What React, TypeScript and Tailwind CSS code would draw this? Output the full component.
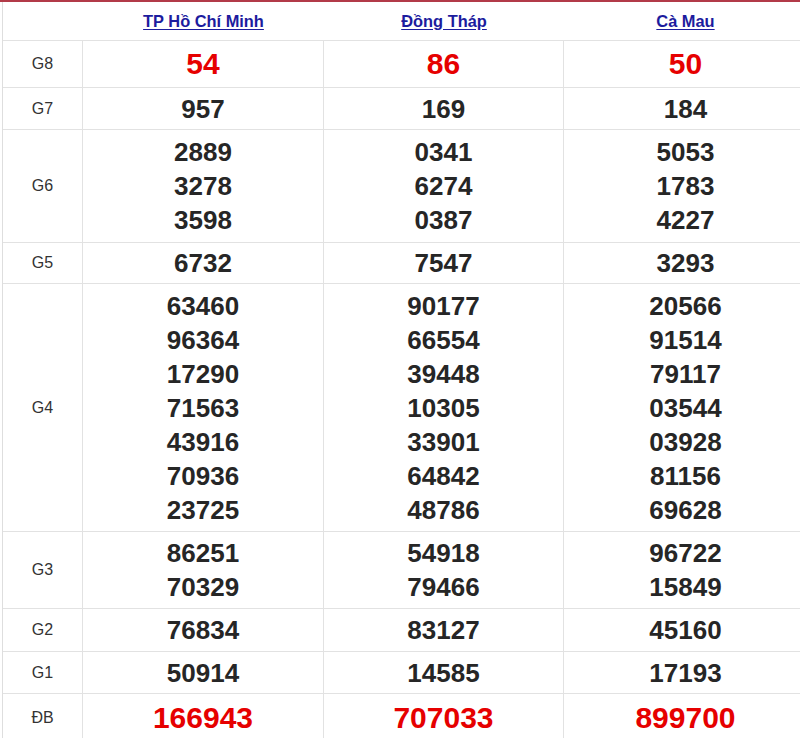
import React from "react";

type Row = { label: string; values: string[][]; red?: boolean; pad?: string };

const rows: Row[] = [
  { label: "G8", values: [["54"], ["86"], ["50"]], red: true, pad: "py-[3px]" },
  { label: "G7", values: [["957"], ["169"], ["184"]] },
  {
    label: "G6",
    values: [
      ["2889", "3278", "3598"],
      ["0341", "6274", "0387"],
      ["5053", "1783", "4227"],
    ],
    pad: "py-[5px]",
  },
  { label: "G5", values: [["6732"], ["7547"], ["3293"]], pad: "py-[3px]" },
  {
    label: "G4",
    values: [
      ["63460", "96364", "17290", "71563", "43916", "70936", "23725"],
      ["90177", "66554", "39448", "10305", "33901", "64842", "48786"],
      ["20566", "91514", "79117", "03544", "03928", "81156", "69628"],
    ],
    pad: "py-[4.5px]",
  },
  {
    label: "G3",
    values: [
      ["86251", "70329"],
      ["54918", "79466"],
      ["96722", "15849"],
    ],
    pad: "py-[4px]",
  },
  { label: "G2", values: [["76834"], ["83127"], ["45160"]], pad: "py-[4px]" },
  { label: "G1", values: [["50914"], ["14585"], ["17193"]] },
  { label: "ĐB", values: [["166943"], ["707033"], ["899700"]], red: true, pad: "py-[3.5px]" },
];

const provinces = ["TP Hồ Chí Minh", "Đồng Tháp", "Cà Mau"];

export default function App() {
  return (
    <div
      className="w-[800px] h-[738px] overflow-hidden bg-white"
      style={{ fontFamily: '"Liberation Sans", Arial, sans-serif' }}
    >
      <div className="w-[806px] border-t-2 border-t-[#b23a48]">
        <div className="ml-[2px] w-[804px] border-l border-l-[#dedede]">
          <div className="grid grid-cols-[80px_241px_240px_243px] h-[39px] border-b border-b-[#e2e2e2] items-center">
            <div />
            {provinces.map((p) => (
              <div key={p} className="text-center">
                <a
                  href="#"
                  className="text-[16.4px] font-bold text-[#1c1c9e] underline underline-offset-2"
                >
                  {p}
                </a>
              </div>
            ))}
          </div>
          {rows.map((r) => (
            <div
              key={r.label}
              className="grid grid-cols-[80px_241px_240px_243px] border-b border-b-[#e2e2e2]"
            >
              <div className="flex items-center justify-center border-r border-r-[#e2e2e2] text-[16px] text-[#333]">
                {r.label}
              </div>
              {r.values.map((col, i) => (
                <div
                  key={i}
                  className={
                    "flex flex-col items-center justify-center " +
                    (r.pad ?? "py-[3.5px]") +
                    " " +
                    (i < 2 ? "border-r border-r-[#e2e2e2]" : "")
                  }
                >
                  {col.map((v, j) =>
                    r.red ? (
                      <div
                        key={j}
                        className="text-[30px] leading-[40px] font-bold text-[#e60000]"
                      >
                        {v}
                      </div>
                    ) : (
                      <div
                        key={j}
                        className="text-[26px] leading-[34px] font-bold text-[#262626]"
                      >
                        {v}
                      </div>
                    )
                  )}
                </div>
              ))}
            </div>
          ))}
        </div>
      </div>
    </div>
  );
}
